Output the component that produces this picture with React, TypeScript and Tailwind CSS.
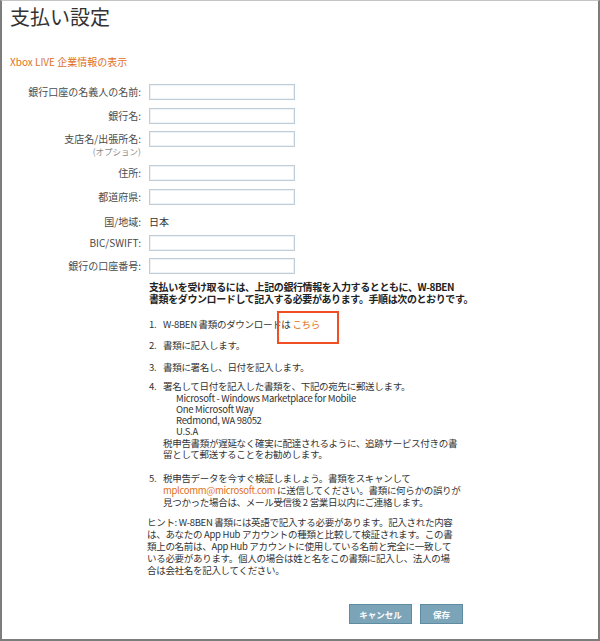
import React from 'react';

const FONT = { fontFamily: '"Noto Sans CJK JP", "Noto Sans", sans-serif' };

type Row = { label: string; note?: string; value?: string; mt: string };

const rows: Row[] = [
  { label: '銀行口座の名義人の名前:', mt: 'mt-[16px]' },
  { label: '銀行名:', mt: 'mt-[8px]' },
  { label: '支店名/出張所名:', note: '(オプション)', mt: 'mt-[7px]' },
  { label: '住所:', mt: 'mt-[8px]' },
  { label: '都道府県:', mt: 'mt-[8px]' },
  { label: '国/地域:', value: '日本', mt: 'mt-[9px]' },
  { label: 'BIC/SWIFT:', mt: 'mt-[5px]' },
  { label: '銀行の口座番号:', mt: 'mt-[7px]' },
];

const FormRow = ({ row }: { row: Row }) => (
  <div className={`flex items-start gap-[8px] ${row.mt}`}>
    <div className="w-[139px] text-right">
      <div className="h-[16px] leading-[16px] text-[10px] text-[#4a4a4a] whitespace-nowrap">{row.label}</div>
      {row.note && <div className="leading-[11px] text-[8.5px] text-[#8a8a8a] mt-[-1px]">{row.note}</div>}
    </div>
    {row.value ? (
      <div className="h-[16px] leading-[16px] text-[10px] text-[#333]">{row.value}</div>
    ) : (
      <div className="w-[146px] h-[16px] border border-[#bfcdd8] shadow-[inset_0_0_0_1px_#eef2f5] bg-white" />
    )}
  </div>
);

const Num = ({ n }: { n: string }) => <span className="inline-block w-[14px]">{n}</span>;

const App: React.FC = () => {
  return (
    <div
      style={FONT}
      className="relative w-[600px] h-[641px] bg-white border-t border-l-2 border-r-2 border-b-2 border-[#7d7d7d] border-t-[#c4c4c4] overflow-hidden"
    >
      <h1 className="pl-[8px] pt-[4px] text-[20px] leading-[24px] text-[#333]">支払い設定</h1>
      <div className="mt-[27px] pl-[8px] text-[10px] leading-[12px] text-[#e0701a]">Xbox LIVE 企業情報の表示</div>

      <div>
        {rows.map((r) => (
          <FormRow key={r.label} row={r} />
        ))}
      </div>

      <div className="ml-[147px] w-[320px] text-[9.5px] tracking-[-0.3px] text-[#333] whitespace-nowrap">
        <p className="mt-[7px] font-bold text-[10px] tracking-[-0.4px] leading-[12px] text-[#222]">
          支払いを受け取るには、上記の銀行情報を入力するとともに、W-8BEN
          <br />
          書類をダウンロードして記入する必要があります。手順は次のとおりです。
        </p>

        <div className="mt-[13px] leading-[12px]">
          <Num n="1." />W-8BEN 書類のダウンロードは <span className="text-[#e0701a]">こちら</span>
        </div>
        <div className="mt-[9px] leading-[12px]">
          <Num n="2." />書類に記入します。
        </div>
        <div className="mt-[10px] leading-[12px]">
          <Num n="3." />書類に署名し、日付を記入します。
        </div>
        <div className="mt-[7px]">
          <div className="leading-[12px]">
            <Num n="4." />署名して日付を記入した書類を、下記の宛先に郵送します。
          </div>
          <div className="mt-[1px] pl-[27px] leading-[11px]">
            <div>Microsoft - Windows Marketplace for Mobile</div>
            <div>One Microsoft Way</div>
            <div>Redmond, WA 98052</div>
            <div>U.S.A</div>
          </div>
          <div className="mt-[1px] pl-[14px] leading-[11px]">
            <div>税申告書類が遅延なく確実に配達されるように、追跡サービス付きの書</div>
            <div>留として郵送することをお勧めします。</div>
          </div>
        </div>
        <div className="mt-[12px] leading-[12px]">
          <div>
            <Num n="5." />税申告データを今すぐ検証しましょう。書類をスキャンして
          </div>
          <div className="pl-[14px]">
            <span className="text-[#e0701a]">mplcomm@microsoft.com</span> に送信してください。書類に何らかの誤りが
          </div>
          <div className="pl-[14px]">見つかった場合は、メール受信後 2 営業日以内にご連絡します。</div>
        </div>
        <div className="mt-[8px] ml-[-2px] leading-[12px]">
          <div>ヒント: W-8BEN 書類には英語で記入する必要があります。記入された内容</div>
          <div>は、あなたの App Hub アカウントの種類と比較して検証されます。この書</div>
          <div>類上の名前は、App Hub アカウントに使用している名前と完全に一致して</div>
          <div>いる必要があります。個人の場合は姓と名をこの書類に記入し、法人の場</div>
          <div>合は会社名を記入してください。</div>
        </div>
      </div>

      <div className="mt-[28px] ml-[347px] flex gap-[8px]">
        <button className="w-[63px] h-[20px] bg-[#7ca4b8] border border-[#5d8ca3] text-white text-[8.5px] font-bold">
          キャンセル
        </button>
        <button className="w-[43px] h-[20px] bg-[#7ca4b8] border border-[#5d8ca3] text-white text-[8.5px] font-bold">
          保存
        </button>
      </div>

      {/* annotation box around the download link */}
      <div className="absolute left-[275px] top-[310px] w-[62px] h-[33px] border-2 border-[#f04e23]" />
    </div>
  );
};

export default App;
